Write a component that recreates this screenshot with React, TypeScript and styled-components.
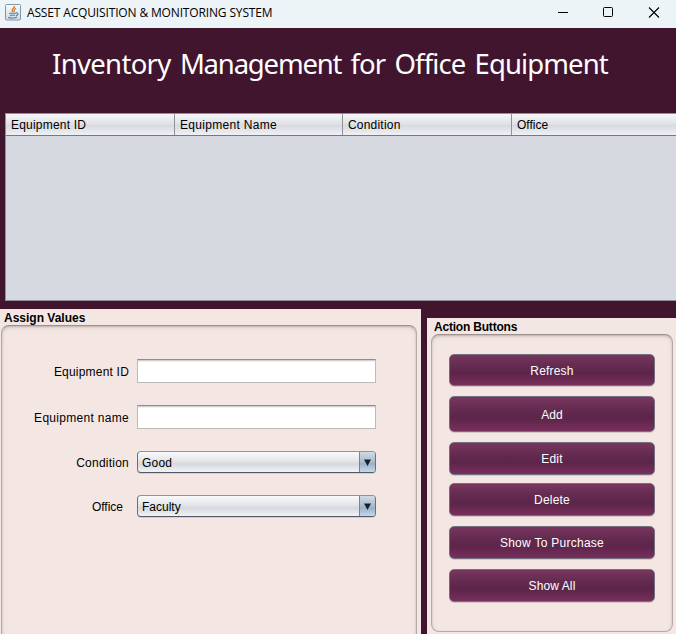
import React from "react";
import styled, { createGlobalStyle } from "styled-components";

const GlobalStyle = createGlobalStyle`
  *, *::before, *::after { box-sizing: border-box; }
  body {
    margin: 0;
    overflow: hidden;
    font-family: "Liberation Sans", Arial, sans-serif;
    font-size: 12px;
    color: #000;
  }
`;

const Window = styled.div`
  width: 676px;
  height: 634px;
  overflow: hidden;
  display: flex;
  flex-direction: column;
  background: #42152f;
`;

const TitleBar = styled.header`
  flex: 0 0 28px;
  display: flex;
  align-items: center;
  padding: 0 16px 3px 5px;
  background: #edf4f8;
`;

const TitleText = styled.span`
  margin-left: 6px;
  flex: 1;
  font: 12px/16px "Open Sans", sans-serif;
  letter-spacing: -0.15px;
  white-space: nowrap;
`;

const WindowControls = styled.div`
  display: flex;
  gap: 34px;
`;

const Heading = styled.h1`
  flex: 0 0 85px;
  margin: 0;
  padding: 16px 0 0 52px;
  font: 400 27.5px/40px "Noto Sans", sans-serif;
  letter-spacing: -0.9px;
  word-spacing: 3px;
  font-variant-ligatures: none;
  white-space: nowrap;
  color: #fff;
`;

const HeadingWord = styled.span<{ $tracking: number }>`
  letter-spacing: ${(p) => p.$tracking}px;
`;

const Table = styled.section`
  flex: 0 0 188px;
  margin-left: 5px;
  border: solid #8c909b;
  border-width: 1px 0 1px 1px;
  background: #d6d9e0;
`;

const TableHeader = styled.div`
  display: grid;
  grid-template-columns: 169px 168px 169px 1fr;
  height: 22px;
  border-bottom: 1px solid #747985;
  background: linear-gradient(#f5f6f8 0, #e1e3e7 45%, #d8dadf 55%, #eef1f5 100%);
`;

const HeaderCell = styled.div<{ $last?: boolean; $tracking: number }>`
  padding: 1px 0 0 5px;
  line-height: 20px;
  letter-spacing: ${(p) => p.$tracking}px;
  border-right: ${(p) => (p.$last ? "0" : "1px solid #8f929b")};
`;

const Panels = styled.div`
  flex: 1;
  display: flex;
  align-items: flex-start;
  gap: 6px;
  padding-top: 8px;
`;

const Panel = styled.section<{ $width: number; $inset: string; $top?: number }>`
  flex: 0 0 ${(p) => p.$width}px;
  height: 340px;
  margin-top: ${(p) => p.$top ?? 0}px;
  padding: ${(p) => p.$inset};
  background: #f4e7e3;
`;

const PanelTitle = styled.h2<{ $tracking?: number }>`
  margin: 0;
  padding: 1px 0 0 3px;
  font-size: 12px;
  line-height: 16px;
  height: 16px;
  letter-spacing: ${(p) => p.$tracking ?? 0}px;
`;

const Group = styled.div<{ $height: number; $pad: string }>`
  height: ${(p) => p.$height}px;
  padding: ${(p) => p.$pad};
  display: flex;
  flex-direction: column;
  border: 1px solid #b5a9a7;
  border-top-color: #9b918f;
  border-radius: 8px;
  box-shadow: inset 0 1px 2px #bfb2af, inset 0 2px 5px #e2d5d1;
`;

const Field = styled.label`
  display: grid;
  grid-template-columns: 127px 239px;
  column-gap: 8px;
  align-items: center;
  margin-bottom: 22px;
`;

const FieldLabel = styled.span<{ $shift?: number; $tracking: number }>`
  padding: 1px ${(p) => p.$shift ?? 0}px 0 0;
  text-align: right;
  letter-spacing: ${(p) => p.$tracking}px;
  white-space: nowrap;
`;

const Input = styled.input`
  width: 239px;
  height: 24px;
  padding: 0 5px;
  border: 1px solid #bdb9b9;
  border-top-color: #8d8d8f;
  box-shadow: inset 0 1px #d0d0d1, inset 0 2px #f2f2f2;
  background: #fff;
  outline: 0;
`;

const Combo = styled.div`
  display: flex;
  height: 22px;
  overflow: hidden;
  border: 1px solid #6b717c;
  border-top-color: #929498;
  border-bottom-color: #525966;
  border-radius: 4px;
  background: linear-gradient(#f9f9fa 0, #e3e5e8 45%, #d5d8dd 60%, #f0f3f8 100%);
  box-shadow: 0 1px #d6ccca;
`;

const ComboValue = styled.span<{ $tracking?: number }>`
  flex: 1;
  padding: 1px 0 0 4px;
  line-height: 21px;
  letter-spacing: ${(p) => p.$tracking ?? 0}px;
`;

const ComboArrow = styled.span`
  width: 16px;
  display: flex;
  align-items: center;
  justify-content: center;
  border-left: 1px solid #71869c;
  background: linear-gradient(#d0dae5 0, #a9bccd 48%, #9cb1c5 60%, #c1d9ef 100%);
`;

const ActionButton = styled.button<{ $height?: number; $gap?: number; $drop?: number; $tracking?: number }>`
  flex: none;
  width: 206px;
  height: ${(p) => p.$height ?? 33}px;
  margin: 0 0 ${(p) => p.$gap ?? 10}px;
  padding: ${(p) => p.$drop ?? 0}px 0 0;
  border: 1px solid #75707d;
  border-radius: 5px;
  background: linear-gradient(#78365f 0, #652b50 35%, #5c2549 62%, #782f5d 100%);
  box-shadow: 0 1px #d6c8c6;
  font: 12px/14px "Liberation Sans", Arial, sans-serif;
  letter-spacing: ${(p) => p.$tracking ?? 0.2}px;
  color: #fff;
`;

const JavaIcon = () => (
  <svg width="16" height="17" viewBox="0 0 16 17" fill="none">
    <defs>
      <linearGradient id="tile" x1="0" y1="0" x2="0" y2="1">
        <stop stopColor="#f8fafb" />
        <stop offset="1" stopColor="#cfdae3" />
      </linearGradient>
    </defs>
    <rect x=".5" y=".5" width="15" height="15.5" rx="1" fill="url(#tile)" stroke="#7d98ad" />
    <path d="M9.6 2C9.9 4 5.6 4.8 7.6 8M11 4.4C8.1 5.3 10 6.4 8.6 8.2" stroke="#e57a25" strokeWidth="1.3" />
    <path d="M4 9.2h7M4.8 11.2h5.4M11 8.9c2.8-.3 2.4 2.3.1 2.7M3.2 13.2c2 1.2 7 1 8.8-.2" stroke="#537d9f" strokeWidth="1.1" />
  </svg>
);

const Arrow = () => (
  <svg width="7" height="7" viewBox="0 0 7 7">
    <path d="M0 .5h7L3.5 7z" fill="#17202a" />
  </svg>
);

const columns = [
  { name: "Equipment ID", tracking: 0.2 },
  { name: "Equipment Name", tracking: 0.3 },
  { name: "Condition", tracking: 0.2 },
  { name: "Office", tracking: 0 },
];

const actions = [
  { label: "Refresh", height: 32, drop: 2 },
  { label: "Add", height: 36, drop: 2, tracking: 0.05 },
  { label: "Edit", gap: 8 },
  { label: "Delete" },
  { label: "Show To Purchase", tracking: 0.27 },
  { label: "Show All", tracking: 0.1 },
];

export default function App() {
  return (
    <>
      <GlobalStyle />
      <Window>
        <TitleBar>
          <JavaIcon />
          <TitleText>ASSET ACQUISITION &amp; MONITORING SYSTEM</TitleText>
          <WindowControls>
            <svg width="12" height="12" viewBox="0 0 12 12"><path d="M2 5.5h10" stroke="#000" /></svg>
            <svg width="12" height="12" viewBox="0 0 12 12"><rect x="1.5" y=".5" width="9" height="9" rx="1" fill="none" stroke="#000" /></svg>
            <svg width="12" height="12" viewBox="0 0 12 12"><path d="m1 .5 10 10M11 .5 1 10.5" stroke="#000" strokeWidth="1.1" /></svg>
          </WindowControls>
        </TitleBar>
        <Heading>
          <HeadingWord $tracking={-0.68}>Inventory</HeadingWord>{" "}
          <HeadingWord $tracking={-1.2}>Management</HeadingWord> for Office Equipment
        </Heading>
        <Table>
          <TableHeader>
            {columns.map((c, i) => (
              <HeaderCell key={c.name} $tracking={c.tracking} $last={i === columns.length - 1}>{c.name}</HeaderCell>
            ))}
          </TableHeader>
        </Table>
        <Panels>
          <Panel $width={421} $inset="0 4px 0 1px">
            <PanelTitle>Assign Values</PanelTitle>
            <Group $height={330} $pad="33px 0 0 0">
              <Field>
                <FieldLabel $tracking={0.2}>Equipment ID</FieldLabel>
                <Input />
              </Field>
              <Field>
                <FieldLabel $tracking={0.3}>Equipment name</FieldLabel>
                <Input />
              </Field>
              <Field>
                <FieldLabel $tracking={0.23}>Condition</FieldLabel>
                <Combo><ComboValue $tracking={0.2}>Good</ComboValue><ComboArrow><Arrow /></ComboArrow></Combo>
              </Field>
              <Field>
                <FieldLabel $tracking={0} $shift={6}>Office</FieldLabel>
                <Combo><ComboValue>Faculty</ComboValue><ComboArrow><Arrow /></ComboArrow></Combo>
              </Field>
            </Group>
          </Panel>
          <Panel $width={249} $top={9} $inset="0 3px 0 4px">
            <PanelTitle $tracking={-0.2}>Action Buttons</PanelTitle>
            <Group $height={298} $pad="19px 0 0 17px">
              {actions.map((a) => (
                <ActionButton key={a.label} $height={a.height} $gap={a.gap} $drop={a.drop} $tracking={a.tracking}>{a.label}</ActionButton>
              ))}
            </Group>
          </Panel>
        </Panels>
      </Window>
    </>
  );
}
